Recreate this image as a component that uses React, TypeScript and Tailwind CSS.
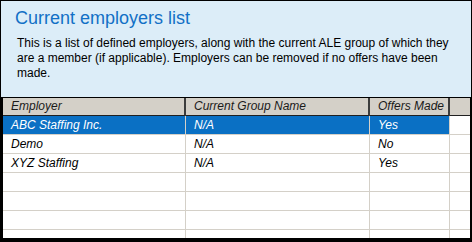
import React from "react";

type Row = { employer: string; group: string; offers: string };

const ROWS: Row[] = [
  { employer: "ABC Staffing Inc.", group: "N/A", offers: "Yes" },
  { employer: "Demo", group: "N/A", offers: "No" },
  { employer: "XYZ Staffing", group: "N/A", offers: "Yes" },
  { employer: "", group: "", offers: "" },
  { employer: "", group: "", offers: "" },
  { employer: "", group: "", offers: "" },
  { employer: "", group: "", offers: "" },
];

const COLS = "grid grid-cols-[183px_184px_80px_20px]";

function HeaderCell({ label }: { label: string }) {
  return (
    <div className="h-[18px] bg-[#d4d0c8] border-r-2 border-b border-r-[#3c3c3c] border-b-[#202020] pl-[8px] text-[12px] leading-[17px] italic text-[#1a1a1a] whitespace-nowrap overflow-hidden">
      {label}
    </div>
  );
}

export default function App() {
  return (
    <div
      className="w-[472px] h-[242px] flex flex-col bg-white overflow-hidden"
      style={{ fontFamily: '"Liberation Sans", Arial, sans-serif' }}
    >
      <div className="h-[97px] shrink-0 border border-b-0 border-black bg-[#dcedf8] pl-[14px] pr-[10px] pt-[7px]">
        <div className="text-[18px] leading-[20px] text-[#1270c6]">Current employers list</div>
        <p className="mt-[8px] pl-[2px] text-[12px] leading-[15px] text-black">
          This is a list of defined employers, along with the current ALE group of which they
          are a member (if applicable). Employers can be removed if no offers have been made.
        </p>
      </div>
      <div className="flex-1 min-h-0 overflow-hidden border-t border-l-[3px] border-r-2 border-b-[4px] border-black bg-white">
        <div className={COLS}>
          <HeaderCell label="Employer" />
          <HeaderCell label="Current Group Name" />
          <HeaderCell label="Offers Made" />
          <div className="h-[18px] bg-[#d4d0c8] border-b border-b-[#202020]" />
        </div>
        {ROWS.map((r, i) => {
          const sel = i === 0;
          const cell = `h-[19px] border-r border-b border-[#d4d0c8] pl-[8px] text-[12px] leading-[18px] italic whitespace-nowrap overflow-hidden ${
            sel ? "bg-[#0a70c4] text-white" : "text-black"
          }`;
          return (
            <div key={i} className={COLS}>
              <div className={cell}>{r.employer}</div>
              <div className={cell}>{r.group}</div>
              <div className={cell}>{r.offers}</div>
              <div className="h-[19px] border-b border-[#d4d0c8]" />
            </div>
          );
        })}
      </div>
    </div>
  );
}
